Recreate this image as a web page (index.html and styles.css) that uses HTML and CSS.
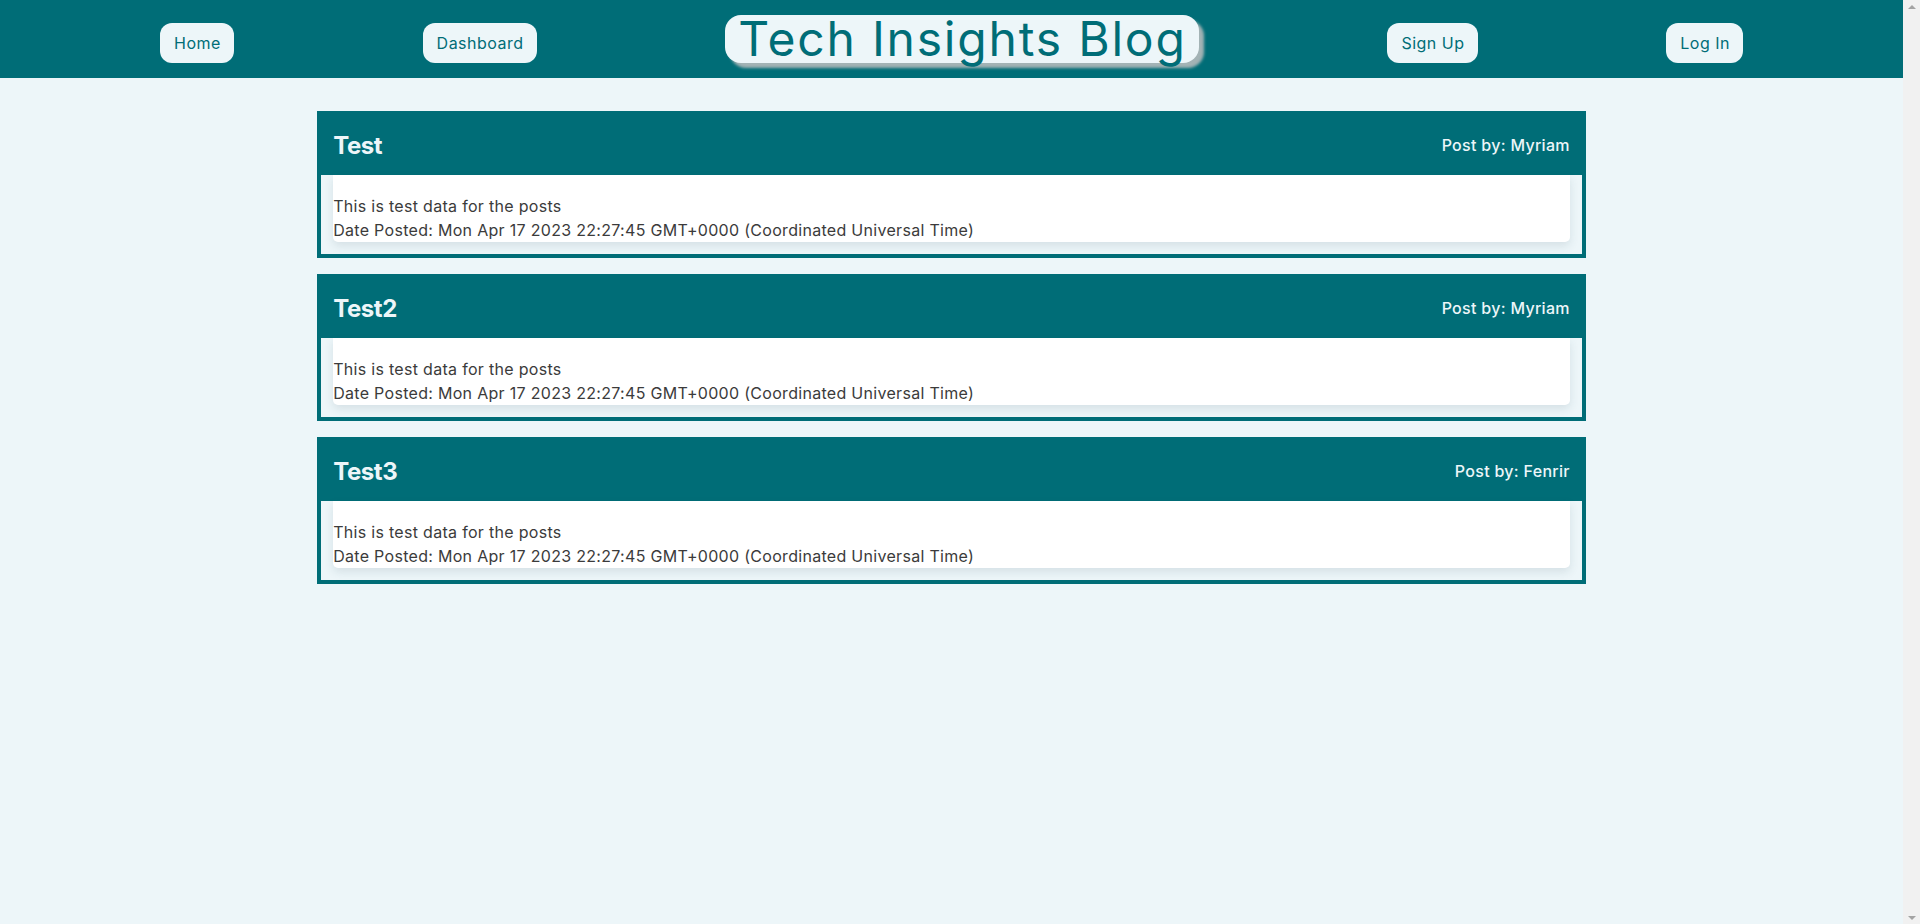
FILE: index.html
```html
<!DOCTYPE html>
<html lang="en">
<head>
<meta charset="utf-8">
<title>Tech Insights Blog</title>
<link rel="stylesheet" href="styles.css">
</head>
<body>
<div class="page">
  <header class="site-header">
    <nav class="nav">
      <a class="nav-btn" href="#">Home</a>
      <a class="nav-btn" href="#">Dashboard</a>
      <h1 class="site-title">Tech Insights Blog</h1>
      <a class="nav-btn" href="#">Sign Up</a>
      <a class="nav-btn" href="#">Log In</a>
    </nav>
  </header>
  <main class="posts">
    <article class="post">
      <div class="post-head">
        <h2 class="post-title">Test</h2>
        <span class="post-author">Post by: Myriam</span>
      </div>
      <div class="post-body">
        <p>This is test data for the posts</p>
        <p>Date Posted: Mon Apr 17 2023 22:27:45 GMT+0000 (Coordinated Universal Time)</p>
      </div>
    </article>
    <article class="post">
      <div class="post-head">
        <h2 class="post-title">Test2</h2>
        <span class="post-author">Post by: Myriam</span>
      </div>
      <div class="post-body">
        <p>This is test data for the posts</p>
        <p>Date Posted: Mon Apr 17 2023 22:27:45 GMT+0000 (Coordinated Universal Time)</p>
      </div>
    </article>
    <article class="post">
      <div class="post-head">
        <h2 class="post-title">Test3</h2>
        <span class="post-author">Post by: Fenrir</span>
      </div>
      <div class="post-body">
        <p>This is test data for the posts</p>
        <p>Date Posted: Mon Apr 17 2023 22:27:45 GMT+0000 (Coordinated Universal Time)</p>
      </div>
    </article>
  </main>
</div>
<aside class="scrollbar" aria-hidden="true">
  <span class="sb-arrow sb-up"></span>
  <span class="sb-arrow sb-down"></span>
</aside>
</body>
</html>
```
FILE: styles.css
```css
html, body {
  height: 100%;
}
body {
  margin: 0;
  display: flex;
  background: #edf6f9;
  font-family: Inter, "Noto Sans", sans-serif;
  color: #3b3b3b;
  overflow: hidden;
}
.page {
  flex: 1;
  min-width: 0;
}
.scrollbar {
  width: 17px;
  background: #f1f1f1;
  display: flex;
  flex-direction: column;
  justify-content: space-between;
  align-items: center;
  padding: 5px 0 4px;
  box-sizing: border-box;
}
.sb-arrow {
  width: 0;
  height: 0;
  border-left: 4px solid transparent;
  border-right: 4px solid transparent;
}
.sb-up {
  border-bottom: 4px solid #a3a3a3;
}
.sb-down {
  border-top: 4px solid #a3a3a3;
}
.site-header {
  background: #006d77;
  height: 78px;
}
.nav {
  height: 100%;
  display: flex;
  align-items: center;
  justify-content: space-between;
  padding: 0 160px;
}
.nav-btn {
  display: block;
  background: #edf6f9;
  color: #006d77;
  text-decoration: none;
  font-size: 16px;
  letter-spacing: 0.5px;
  line-height: 20px;
  padding: 10px 13px 10px 14px;
  border-radius: 12px;
  margin-top: 7px;
}
.site-title {
  margin: 0;
  background: #edf6f9;
  color: #006d77;
  font-weight: 400;
  font-size: 48px;
  letter-spacing: 1.8px;
  line-height: 48px;
  padding: 0 12px 0 13px;
  border-radius: 16px;
  box-shadow: 5px 5px 3px #a3b3b5;
}
.posts {
  width: 66.667%;
  margin: 33px auto 0;
  display: flex;
  flex-direction: column;
  gap: 16px;
}
.post {
  border: 4px solid #006d77;
  background: #edf6f9;
}
.post-head {
  background: #006d77;
  color: #edf6f9;
  display: flex;
  justify-content: space-between;
  align-items: center;
  padding: 12px;
  height: 36px;
}
.post-title {
  margin: 0;
  font-size: 24px;
  font-weight: 700;
  letter-spacing: -0.4px;
}
.post-author {
  font-size: 16px;
  font-weight: 500;
  letter-spacing: 0.3px;
}
.post-body {
  background: #fff;
  margin: 0 12px 12px;
  padding-top: 19px;
  border-radius: 0 0 5px 5px;
  box-shadow: 0 4px 10px rgba(40, 70, 90, 0.12);
}
.post-body p {
  margin: 0;
  font-size: 16px;
  line-height: 24px;
  letter-spacing: 0.3px;
}
```
